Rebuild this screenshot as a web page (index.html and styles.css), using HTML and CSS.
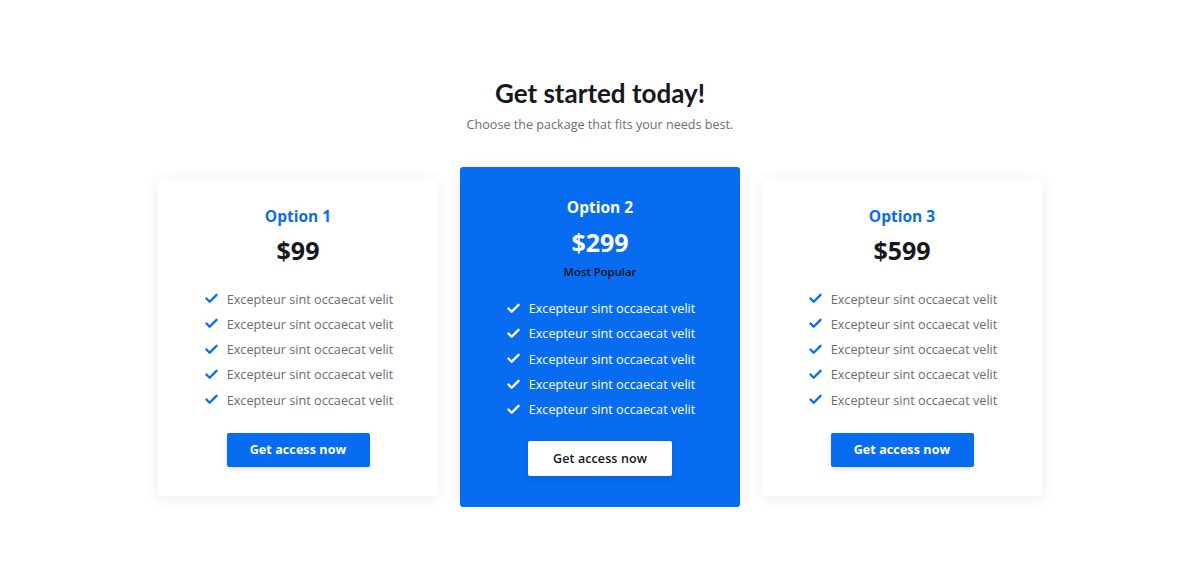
FILE: index.html
```html
<!DOCTYPE html>
<html lang="en">
<head>
<meta charset="utf-8">
<title>Pricing</title>
<link rel="stylesheet" href="styles.css">
</head>
<body>
<section class="pricing">
  <h1 class="title">Get started today!</h1>
  <p class="subtitle">Choose the package that fits your needs best.</p>
  <div class="plans">
    <div class="plan">
      <h2 class="plan-name">Option 1</h2>
      <div class="plan-price">$99</div>
      <ul class="features">
        <li><svg class="check" viewBox="0 0 14 12"><polyline points="1.5,6 5,9.5 12.5,2"/></svg>Excepteur sint occaecat velit</li>
        <li><svg class="check" viewBox="0 0 14 12"><polyline points="1.5,6 5,9.5 12.5,2"/></svg>Excepteur sint occaecat velit</li>
        <li><svg class="check" viewBox="0 0 14 12"><polyline points="1.5,6 5,9.5 12.5,2"/></svg>Excepteur sint occaecat velit</li>
        <li><svg class="check" viewBox="0 0 14 12"><polyline points="1.5,6 5,9.5 12.5,2"/></svg>Excepteur sint occaecat velit</li>
        <li><svg class="check" viewBox="0 0 14 12"><polyline points="1.5,6 5,9.5 12.5,2"/></svg>Excepteur sint occaecat velit</li>
      </ul>
      <a class="btn" href="#">Get access now</a>
    </div>
    <div class="plan plan-featured">
      <h2 class="plan-name">Option 2</h2>
      <div class="plan-price">$299</div>
      <div class="plan-badge">Most Popular</div>
      <ul class="features">
        <li><svg class="check" viewBox="0 0 14 12"><polyline points="1.5,6 5,9.5 12.5,2"/></svg>Excepteur sint occaecat velit</li>
        <li><svg class="check" viewBox="0 0 14 12"><polyline points="1.5,6 5,9.5 12.5,2"/></svg>Excepteur sint occaecat velit</li>
        <li><svg class="check" viewBox="0 0 14 12"><polyline points="1.5,6 5,9.5 12.5,2"/></svg>Excepteur sint occaecat velit</li>
        <li><svg class="check" viewBox="0 0 14 12"><polyline points="1.5,6 5,9.5 12.5,2"/></svg>Excepteur sint occaecat velit</li>
        <li><svg class="check" viewBox="0 0 14 12"><polyline points="1.5,6 5,9.5 12.5,2"/></svg>Excepteur sint occaecat velit</li>
      </ul>
      <a class="btn btn-light" href="#">Get access now</a>
    </div>
    <div class="plan">
      <h2 class="plan-name">Option 3</h2>
      <div class="plan-price">$599</div>
      <ul class="features">
        <li><svg class="check" viewBox="0 0 14 12"><polyline points="1.5,6 5,9.5 12.5,2"/></svg>Excepteur sint occaecat velit</li>
        <li><svg class="check" viewBox="0 0 14 12"><polyline points="1.5,6 5,9.5 12.5,2"/></svg>Excepteur sint occaecat velit</li>
        <li><svg class="check" viewBox="0 0 14 12"><polyline points="1.5,6 5,9.5 12.5,2"/></svg>Excepteur sint occaecat velit</li>
        <li><svg class="check" viewBox="0 0 14 12"><polyline points="1.5,6 5,9.5 12.5,2"/></svg>Excepteur sint occaecat velit</li>
        <li><svg class="check" viewBox="0 0 14 12"><polyline points="1.5,6 5,9.5 12.5,2"/></svg>Excepteur sint occaecat velit</li>
      </ul>
      <a class="btn" href="#">Get access now</a>
    </div>
  </div>
</section>
</body>
</html>
```

FILE: styles.css
```css
* { box-sizing: border-box; }

body {
  margin: 0;
  background: #ffffff;
  font-family: "Open Sans", "Liberation Sans", sans-serif;
  color: #212529;
}

.pricing {
  display: flex;
  flex-direction: column;
  align-items: center;
  padding-top: 77px;
}

.title {
  margin: 0;
  font-family: Lato, "Open Sans", sans-serif;
  font-size: 26px;
  line-height: 32px;
  font-weight: 700;
  color: #16181d;
}

.subtitle {
  margin: 6px 0 0;
  font-size: 12.6px;
  line-height: 20px;
  color: #6c6f73;
}

.plans {
  display: flex;
  align-items: center;
  gap: 22px;
  margin-top: 32px;
}

.plan {
  width: 280px;
  display: flex;
  flex-direction: column;
  align-items: center;
  background: #ffffff;
  border-radius: 3px;
  box-shadow: 0 2px 16px rgba(0, 0, 0, 0.08);
  padding: 26px 0 29px;
}

.plan-featured {
  background: #086cf0;
  padding: 29px 0 31px;
}

.plan-name {
  margin: 0;
  font-size: 15.5px;
  line-height: 22px;
  font-weight: 700;
  color: #086cf0;
}

.plan-featured .plan-name { color: #ffffff; }

.plan-price {
  margin-top: 8px;
  font-size: 25px;
  line-height: 30px;
  font-weight: 700;
  color: #16181d;
}

.plan-featured .plan-price { color: #ffffff; margin-top: 9px; }

.plan-badge {
  margin-top: 7px;
  font-size: 11.3px;
  line-height: 16px;
  font-weight: 600;
  color: #0c0f16;
}

.features {
  list-style: none;
  margin: 24px 0 0;
  padding: 0;
  display: flex;
  flex-direction: column;
  gap: 5px;
}

.plan-featured .features { margin-top: 18px; }

.features li {
  display: flex;
  align-items: center;
  gap: 9px;
  font-size: 12.7px;
  line-height: 20.3px;
  color: #6a6d70;
}

.plan-featured .features li { color: #ffffff; }

.check {
  width: 13px;
  height: 11px;
  margin-left: 2px;
  flex: none;
  fill: none;
  stroke: #086cf0;
  stroke-width: 2.5;
  stroke-linecap: round;
  stroke-linejoin: round;
}

.plan-featured .check { stroke: #ffffff; }

.btn {
  margin-top: 23px;
  width: 143px;
  height: 34px;
  display: flex;
  align-items: center;
  justify-content: center;
  background: #086cf0;
  color: #ffffff;
  border-radius: 2px;
  font-size: 12.5px;
  font-weight: 700;
  text-decoration: none;
  box-shadow: 0 2px 6px rgba(0, 0, 0, 0.12);
  letter-spacing: 0.1px;
}

.plan-featured .btn { margin-top: 22px; }

.btn-light {
  background: #ffffff;
  color: #111418;
  font-weight: 600;
  width: 144px;
  height: 35px;
}
```
